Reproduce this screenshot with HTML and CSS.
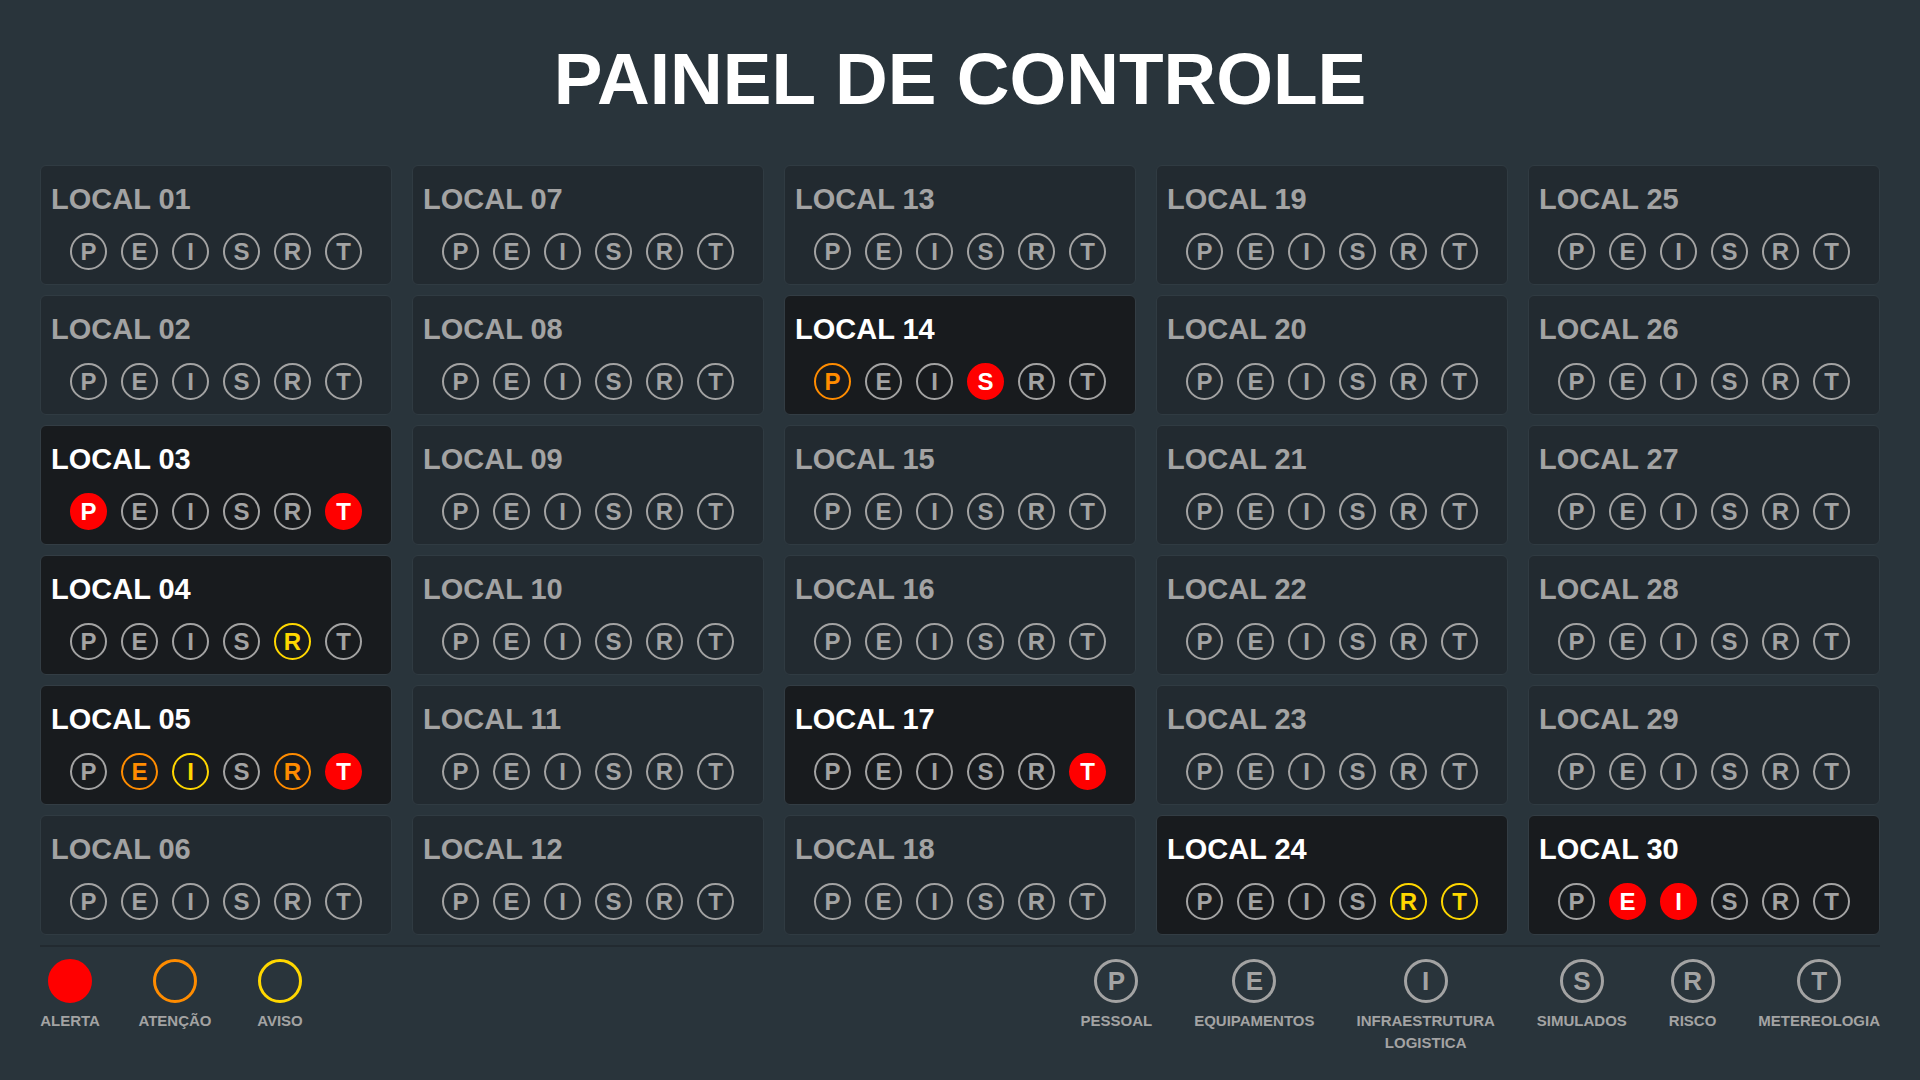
FILE: index.html
```html
<!DOCTYPE html>
<html lang="pt">
<head>
<meta charset="utf-8">
<title>Painel de Controle</title>
<link rel="stylesheet" href="styles.css">
</head>
<body>
<header class="header"><h1 class="title">PAINEL DE CONTROLE</h1></header>
<main class="grid">
  <div class="card"><div class="name">LOCAL 01</div><div class="dots"><span class="dot">P</span><span class="dot">E</span><span class="dot">I</span><span class="dot">S</span><span class="dot">R</span><span class="dot">T</span></div></div>
  <div class="card"><div class="name">LOCAL 02</div><div class="dots"><span class="dot">P</span><span class="dot">E</span><span class="dot">I</span><span class="dot">S</span><span class="dot">R</span><span class="dot">T</span></div></div>
  <div class="card active"><div class="name">LOCAL 03</div><div class="dots"><span class="dot red">P</span><span class="dot">E</span><span class="dot">I</span><span class="dot">S</span><span class="dot">R</span><span class="dot red">T</span></div></div>
  <div class="card active"><div class="name">LOCAL 04</div><div class="dots"><span class="dot">P</span><span class="dot">E</span><span class="dot">I</span><span class="dot">S</span><span class="dot yellow">R</span><span class="dot">T</span></div></div>
  <div class="card active"><div class="name">LOCAL 05</div><div class="dots"><span class="dot">P</span><span class="dot orange">E</span><span class="dot yellow">I</span><span class="dot">S</span><span class="dot orange">R</span><span class="dot red">T</span></div></div>
  <div class="card"><div class="name">LOCAL 06</div><div class="dots"><span class="dot">P</span><span class="dot">E</span><span class="dot">I</span><span class="dot">S</span><span class="dot">R</span><span class="dot">T</span></div></div>

  <div class="card"><div class="name">LOCAL 07</div><div class="dots"><span class="dot">P</span><span class="dot">E</span><span class="dot">I</span><span class="dot">S</span><span class="dot">R</span><span class="dot">T</span></div></div>
  <div class="card"><div class="name">LOCAL 08</div><div class="dots"><span class="dot">P</span><span class="dot">E</span><span class="dot">I</span><span class="dot">S</span><span class="dot">R</span><span class="dot">T</span></div></div>
  <div class="card"><div class="name">LOCAL 09</div><div class="dots"><span class="dot">P</span><span class="dot">E</span><span class="dot">I</span><span class="dot">S</span><span class="dot">R</span><span class="dot">T</span></div></div>
  <div class="card"><div class="name">LOCAL 10</div><div class="dots"><span class="dot">P</span><span class="dot">E</span><span class="dot">I</span><span class="dot">S</span><span class="dot">R</span><span class="dot">T</span></div></div>
  <div class="card"><div class="name">LOCAL 11</div><div class="dots"><span class="dot">P</span><span class="dot">E</span><span class="dot">I</span><span class="dot">S</span><span class="dot">R</span><span class="dot">T</span></div></div>
  <div class="card"><div class="name">LOCAL 12</div><div class="dots"><span class="dot">P</span><span class="dot">E</span><span class="dot">I</span><span class="dot">S</span><span class="dot">R</span><span class="dot">T</span></div></div>

  <div class="card"><div class="name">LOCAL 13</div><div class="dots"><span class="dot">P</span><span class="dot">E</span><span class="dot">I</span><span class="dot">S</span><span class="dot">R</span><span class="dot">T</span></div></div>
  <div class="card active"><div class="name">LOCAL 14</div><div class="dots"><span class="dot orange">P</span><span class="dot">E</span><span class="dot">I</span><span class="dot red">S</span><span class="dot">R</span><span class="dot">T</span></div></div>
  <div class="card"><div class="name">LOCAL 15</div><div class="dots"><span class="dot">P</span><span class="dot">E</span><span class="dot">I</span><span class="dot">S</span><span class="dot">R</span><span class="dot">T</span></div></div>
  <div class="card"><div class="name">LOCAL 16</div><div class="dots"><span class="dot">P</span><span class="dot">E</span><span class="dot">I</span><span class="dot">S</span><span class="dot">R</span><span class="dot">T</span></div></div>
  <div class="card active"><div class="name">LOCAL 17</div><div class="dots"><span class="dot">P</span><span class="dot">E</span><span class="dot">I</span><span class="dot">S</span><span class="dot">R</span><span class="dot red">T</span></div></div>
  <div class="card"><div class="name">LOCAL 18</div><div class="dots"><span class="dot">P</span><span class="dot">E</span><span class="dot">I</span><span class="dot">S</span><span class="dot">R</span><span class="dot">T</span></div></div>

  <div class="card"><div class="name">LOCAL 19</div><div class="dots"><span class="dot">P</span><span class="dot">E</span><span class="dot">I</span><span class="dot">S</span><span class="dot">R</span><span class="dot">T</span></div></div>
  <div class="card"><div class="name">LOCAL 20</div><div class="dots"><span class="dot">P</span><span class="dot">E</span><span class="dot">I</span><span class="dot">S</span><span class="dot">R</span><span class="dot">T</span></div></div>
  <div class="card"><div class="name">LOCAL 21</div><div class="dots"><span class="dot">P</span><span class="dot">E</span><span class="dot">I</span><span class="dot">S</span><span class="dot">R</span><span class="dot">T</span></div></div>
  <div class="card"><div class="name">LOCAL 22</div><div class="dots"><span class="dot">P</span><span class="dot">E</span><span class="dot">I</span><span class="dot">S</span><span class="dot">R</span><span class="dot">T</span></div></div>
  <div class="card"><div class="name">LOCAL 23</div><div class="dots"><span class="dot">P</span><span class="dot">E</span><span class="dot">I</span><span class="dot">S</span><span class="dot">R</span><span class="dot">T</span></div></div>
  <div class="card active"><div class="name">LOCAL 24</div><div class="dots"><span class="dot">P</span><span class="dot">E</span><span class="dot">I</span><span class="dot">S</span><span class="dot yellow">R</span><span class="dot yellow">T</span></div></div>

  <div class="card"><div class="name">LOCAL 25</div><div class="dots"><span class="dot">P</span><span class="dot">E</span><span class="dot">I</span><span class="dot">S</span><span class="dot">R</span><span class="dot">T</span></div></div>
  <div class="card"><div class="name">LOCAL 26</div><div class="dots"><span class="dot">P</span><span class="dot">E</span><span class="dot">I</span><span class="dot">S</span><span class="dot">R</span><span class="dot">T</span></div></div>
  <div class="card"><div class="name">LOCAL 27</div><div class="dots"><span class="dot">P</span><span class="dot">E</span><span class="dot">I</span><span class="dot">S</span><span class="dot">R</span><span class="dot">T</span></div></div>
  <div class="card"><div class="name">LOCAL 28</div><div class="dots"><span class="dot">P</span><span class="dot">E</span><span class="dot">I</span><span class="dot">S</span><span class="dot">R</span><span class="dot">T</span></div></div>
  <div class="card"><div class="name">LOCAL 29</div><div class="dots"><span class="dot">P</span><span class="dot">E</span><span class="dot">I</span><span class="dot">S</span><span class="dot">R</span><span class="dot">T</span></div></div>
  <div class="card active"><div class="name">LOCAL 30</div><div class="dots"><span class="dot">P</span><span class="dot red">E</span><span class="dot red">I</span><span class="dot">S</span><span class="dot">R</span><span class="dot">T</span></div></div>
</main>
<footer class="legend">
  <div class="legend-group levels">
    <div class="legend-item"><span class="big fill-red"></span><span class="label">ALERTA</span></div>
    <div class="legend-item"><span class="big ring-orange"></span><span class="label">ATENÇÃO</span></div>
    <div class="legend-item"><span class="big ring-yellow"></span><span class="label">AVISO</span></div>
  </div>
  <div class="legend-group kinds">
    <div class="legend-item"><span class="big letter">P</span><span class="label">PESSOAL</span></div>
    <div class="legend-item"><span class="big letter">E</span><span class="label">EQUIPAMENTOS</span></div>
    <div class="legend-item"><span class="big letter">I</span><span class="label">INFRAESTRUTURA<br>LOGISTICA</span></div>
    <div class="legend-item"><span class="big letter">S</span><span class="label">SIMULADOS</span></div>
    <div class="legend-item"><span class="big letter">R</span><span class="label">RISCO</span></div>
    <div class="legend-item"><span class="big letter">T</span><span class="label">METEREOLOGIA</span></div>
  </div>
</footer>
</body>
</html>
```

FILE: styles.css
```css
* { box-sizing: border-box; }
html, body { margin: 0; padding: 0; }
body {
  width: 1920px;
  height: 1080px;
  overflow: hidden;
  background: #29343b;
  font-family: "Liberation Sans", Arial, sans-serif;
  font-weight: bold;
  color: #a3a3a3;
  padding: 0 40px;
}
.header {
  padding-top: 43px;
  height: 165px;
}
.title {
  margin: 0;
  font-size: 73px;
  line-height: 72px;
  font-weight: bold;
  color: #ffffff;
  text-align: center;
}
.grid {
  display: grid;
  grid-template-columns: repeat(5, 352px);
  grid-template-rows: repeat(6, 120px);
  grid-auto-flow: column;
  column-gap: 20px;
  row-gap: 10px;
}
.card {
  background: #222a30;
  border: 1px solid #303b42;
  border-radius: 6px;
  padding: 16px 10px 0 10px;
  display: flex;
  flex-direction: column;
}
.card.active {
  background: #181b1e;
  border-color: #333d44;
}
.name {
  font-size: 29px;
  line-height: 34px;
  color: #a3a3a3;
}
.card.active .name { color: #ffffff; }
.dots {
  display: flex;
  justify-content: center;
  gap: 14px;
  margin-top: 17px;
}
.dot {
  width: 37px;
  height: 37px;
  border: 2px solid #a3a3a3;
  border-radius: 50%;
  display: flex;
  align-items: center;
  justify-content: center;
  font-size: 24px;
  line-height: 1;
  color: #a3a3a3;
}
.dot.red { background: #ff0000; border-color: #ff0000; color: #ffffff; }
.dot.orange { border-color: #ff8c00; color: #ff8c00; }
.dot.yellow { border-color: #ffd700; color: #ffd700; }
.legend {
  margin-top: 10px;
  border-top: 2px solid #222a30;
  padding-top: 12px;
  display: flex;
  justify-content: space-between;
}
.legend-group {
  display: flex;
}
.levels { gap: 45px; }
.levels .legend-item { width: 60px; }
.kinds { gap: 42px; }
.legend-item {
  display: flex;
  flex-direction: column;
  align-items: center;
}
.big {
  width: 44px;
  height: 44px;
  border-radius: 50%;
  border: 3px solid #a3a3a3;
  display: flex;
  align-items: center;
  justify-content: center;
  font-size: 26px;
  line-height: 1;
  color: #a3a3a3;
}
.fill-red { background: #ff0000; border-color: #ff0000; }
.ring-orange { border-color: #ff8c00; }
.ring-yellow { border-color: #ffd700; }
.label {
  margin-top: 7px;
  font-size: 15px;
  line-height: 22px;
  text-align: center;
  white-space: nowrap;
  color: #a3a3a3;
}
```
